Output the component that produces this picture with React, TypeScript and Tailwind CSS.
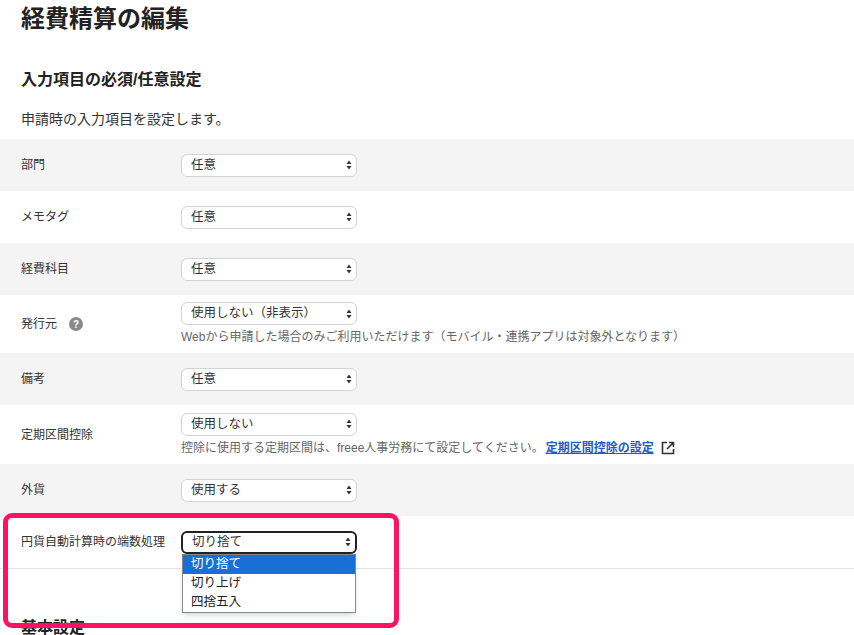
import React from "react";

const Arrows = () => (
  <svg width="6" height="10" viewBox="0 0 6 10" className="shrink-0">
    <path d="M3 0.5L5.5 4H0.5Z M3 9.5L0.5 6H5.5Z" fill="#333" />
  </svg>
);

const Sel = ({ v, focus }: { v: string; focus?: boolean }) => (
  <div
    className={
      "w-[176px] h-[23px] bg-white rounded-[6px] flex items-center justify-between pl-[9px] pr-[4px] text-[12.5px] text-[#333] " +
      (focus ? "border-2 border-[#222] pl-[8px]" : "border border-[#d3d3d3]")
    }
  >
    <span>{v}</span>
    <Arrows />
  </div>
);

const Row = ({
  label,
  v,
  gray,
  note,
  help,
  focus,
  h = "h-[52px]",
}: {
  label: string;
  v: string;
  gray?: boolean;
  note?: React.ReactNode;
  help?: boolean;
  focus?: boolean;
  h?: string;
}) => (
  <div className={"flex items-center pl-[21px] " + h + (gray ? " bg-[#f5f4f4]" : " bg-white")}>
    <div className="w-[160px] text-[12px] text-[#333] flex items-center gap-[12px]">
      {label}
      {help && (
        <span className="w-[14px] h-[14px] rounded-full bg-[#8a8a8a] text-white text-[10px] font-bold flex items-center justify-center">
          ?
        </span>
      )}
    </div>
    <div className="flex flex-col gap-[3px]">
      <Sel v={v} focus={focus} />
      {note && <div className="text-[12px] text-[#666]">{note}</div>}
    </div>
  </div>
);

export default function App() {
  return (
    <div
      className="relative w-[854px] h-[635px] overflow-hidden bg-white text-[#222]"
      style={{ fontFamily: '"Liberation Sans","Noto Sans CJK JP",sans-serif' }}
    >
      <div className="pl-[21px] pt-[4px] h-[66px]">
        <h1 className="text-[24px] font-bold leading-[30px]">経費精算の編集</h1>
      </div>
      <h2 className="pl-[21px] text-[16px] font-bold leading-[24px] h-[40px] pt-[2px]">入力項目の必須/任意設定</h2>
      <p className="pl-[21px] text-[14px] text-[#333] h-[33px] leading-[26px]">申請時の入力項目を設定します。</p>
      <Row label="部門" v="任意" gray />
      <Row label="メモタグ" v="任意" />
      <Row label="経費科目" v="任意" gray />
      <Row
        label="発行元"
        v="使用しない（非表示）"
        help
        h="h-[58px]"
        note="Webから申請した場合のみご利用いただけます（モバイル・連携アプリは対象外となります）"
      />
      <Row label="備考" v="任意" gray />
      <Row
        label="定期区間控除"
        v="使用しない"
        h="h-[59px]"
        note={
          <span className="flex items-center">
            控除に使用する定期区間は、freee人事労務にて設定してください。
            <span className="text-[#1a5fc8] underline font-bold ml-[2px]">定期区間控除の設定</span>
            <svg width="14" height="14" viewBox="0 0 14 14" className="ml-[7px]">
              <path d="M6 1.5H1.5V12.5H12.5V8M8 1.5H12.5V6M12.5 1.5L6 8" stroke="#333" strokeWidth="1.6" fill="none" />
            </svg>
          </span>
        }
      />
      <Row label="外貨" v="使用する" gray />
      <div className="border-b border-[#e3e3e3]">
        <Row label="円貨自動計算時の端数処理" v="切り捨て" focus />
      </div>
      <h2 className="pl-[21px] pt-[47px] text-[16px] font-bold">基本設定</h2>

      <div className="absolute left-[3px] top-[513px] w-[396px] h-[115px] border-[5px] border-[#ff1262] rounded-[9px]" />
      <div className="absolute left-[182px] top-[554px] w-[174px] bg-white border border-[#888] shadow-md text-[12.5px] text-[#222]">
        <div className="h-[19px] pl-[8px] bg-[#1a6fd6] text-white leading-[19px]">切り捨て</div>
        <div className="h-[19px] pl-[8px] leading-[19px]">切り上げ</div>
        <div className="h-[19px] pl-[8px] leading-[19px]">四捨五入</div>
      </div>
    </div>
  );
}
